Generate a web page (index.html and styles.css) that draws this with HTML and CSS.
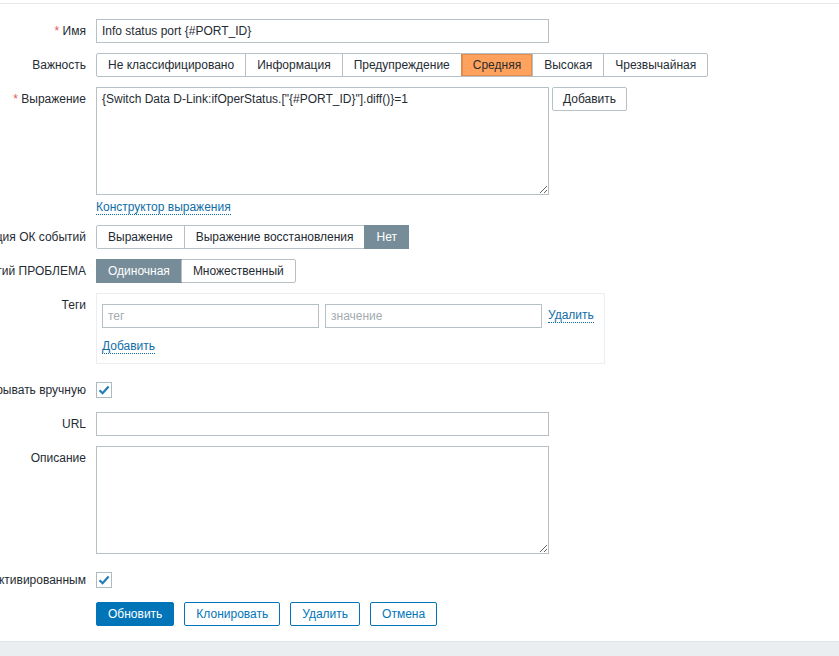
FILE: index.html
```html
<!DOCTYPE html>
<html lang="ru">
<head>
<meta charset="utf-8">
<title>Триггер</title>
<link rel="stylesheet" href="styles.css">
</head>
<body>
<div class="topbar"></div>
<main class="content">
  <div class="form-list">
    <div class="row">
      <div class="lbl"><span><span class="req">*</span> Имя</span></div>
      <div class="field"><input class="text wide" type="text" value="Info status port {#PORT_ID}"></div>
    </div>
    <div class="row">
      <div class="lbl"><span>Важность</span></div>
      <div class="field">
        <div class="seg">
          <span class="seg-btn">Не классифицировано</span>
          <span class="seg-btn">Информация</span>
          <span class="seg-btn">Предупреждение</span>
          <span class="seg-btn sev-avg">Средняя</span>
          <span class="seg-btn">Высокая</span>
          <span class="seg-btn">Чрезвычайная</span>
        </div>
      </div>
    </div>
    <div class="row">
      <div class="lbl"><span><span class="req">*</span> Выражение</span></div>
      <div class="field">
        <div class="expr">
          <textarea class="text wide area">{Switch Data D-Link:ifOperStatus.["{#PORT_ID}"].diff()}=1</textarea>
          <button class="btn-grey" type="button">Добавить</button>
        </div>
        <a class="link constructor" href="#">Конструктор выражения</a>
      </div>
    </div>
    <div class="row">
      <div class="lbl"><span>Генерация ОК событий</span></div>
      <div class="field">
        <div class="seg">
          <span class="seg-btn">Выражение</span>
          <span class="seg-btn">Выражение восстановления</span>
          <span class="seg-btn on">Нет</span>
        </div>
      </div>
    </div>
    <div class="row">
      <div class="lbl"><span>Режим генерации событий ПРОБЛЕМА</span></div>
      <div class="field">
        <div class="seg">
          <span class="seg-btn on">Одиночная</span>
          <span class="seg-btn">Множественный</span>
        </div>
      </div>
    </div>
    <div class="row">
      <div class="lbl"><span>Теги</span></div>
      <div class="field">
        <div class="tags">
          <div class="tag-row">
            <input class="text tag" type="text" placeholder="тег">
            <input class="text tag" type="text" placeholder="значение">
            <a class="link" href="#">Удалить</a>
          </div>
          <a class="link add" href="#">Добавить</a>
        </div>
      </div>
    </div>
    <div class="row row-check">
      <div class="lbl"><span>Разрешить закрывать вручную</span></div>
      <div class="field"><span class="check"><svg width="12" height="10" viewBox="0 0 12 10"><path d="M1.5 5.2 L4.6 8.2 L10.6 1.6" fill="none" stroke="#1f7db8" stroke-width="2.2"/></svg></span></div>
    </div>
    <div class="row">
      <div class="lbl"><span>URL</span></div>
      <div class="field"><input class="text wide" type="text" value=""></div>
    </div>
    <div class="row">
      <div class="lbl"><span>Описание</span></div>
      <div class="field"><textarea class="text wide area"></textarea></div>
    </div>
    <div class="row row-check">
      <div class="lbl"><span>Создать активированным</span></div>
      <div class="field"><span class="check"><svg width="12" height="10" viewBox="0 0 12 10"><path d="M1.5 5.2 L4.6 8.2 L10.6 1.6" fill="none" stroke="#1f7db8" stroke-width="2.2"/></svg></span></div>
    </div>
    <div class="row">
      <div class="lbl"></div>
      <div class="field buttons">
        <button class="btn-main" type="button">Обновить</button>
        <button class="btn-alt" type="button">Клонировать</button>
        <button class="btn-alt" type="button">Удалить</button>
        <button class="btn-alt" type="button">Отмена</button>
      </div>
    </div>
  </div>
</main>
<footer class="footer"></footer>
</body>
</html>
```
FILE: styles.css
```css
html, body {
  margin: 0;
  padding: 0;
  background: #ffffff;
  overflow: hidden;
}
body {
  font-family: "Liberation Sans", Arial, sans-serif;
  font-size: 12px;
  color: #1f2c33;
  width: 839px;
  height: 656px;
  display: flex;
  flex-direction: column;
}
.topbar {
  height: 3px;
  border-bottom: 1px solid #e6e8ea;
}
.content {
  flex: 1;
  padding-top: 15px;
}
.form-list {
  display: flex;
  flex-direction: column;
  gap: 10px;
}
.row {
  display: grid;
  grid-template-columns: 86px 1fr;
  column-gap: 10px;
}
.lbl {
  display: flex;
  justify-content: flex-end;
  white-space: nowrap;
  line-height: 24px;
  min-width: 0;
}
.row-check .lbl {
  padding-top: 4px;
}
.req {
  color: #e45959;
}
.field {
  display: flex;
  flex-direction: column;
  align-items: flex-start;
}
.text {
  box-sizing: border-box;
  font-family: "Liberation Sans", Arial, sans-serif;
  font-size: 12px;
  color: #1f2c33;
  border: 1px solid #b7c0c4;
  background: #fff;
  height: 24px;
  padding: 0 5px;
  margin: 0;
  outline: none;
}
.text::placeholder {
  color: #a3acb0;
}
.wide {
  width: 453px;
}
.area {
  height: 108px;
  padding: 4px 5px;
  line-height: 14px;
  resize: both;
  display: block;
}
.seg {
  display: flex;
  height: 24px;
  border: 1px solid #b7c0c4;
  box-sizing: border-box;
  border-radius: 2px;
}
.seg-btn {
  padding: 0 11px;
  line-height: 22px;
  border-left: 1px solid #b7c0c4;
  white-space: nowrap;
}
.seg-btn:first-child {
  border-left: none;
}
.seg-btn.sev-avg {
  background: #fea25e;
  color: #2c2c2c;
  border-left-color: #d58a4e;
  box-shadow: inset 0 0 0 1px #e08e4f;
}
.seg-btn.on {
  background: #768d99;
  color: #ffffff;
  border-left-color: #768d99;
  box-shadow: 0 0 0 1px #768d99;
}
.expr {
  display: flex;
  align-items: flex-start;
  gap: 3px;
}
.btn-grey {
  font-family: "Liberation Sans", Arial, sans-serif;
  font-size: 12px;
  color: #1f2c33;
  background: #fff;
  border: 1px solid #b7c0c4;
  border-radius: 2px;
  height: 24px;
  padding: 0 10px;
  margin: 0;
}
.link {
  color: #0f6ea8;
  text-decoration: none;
  border-bottom: 1px dotted #0f6ea8;
  line-height: 13px;
}
.constructor {
  margin-top: 6px;
}
.tags {
  box-sizing: border-box;
  width: 509px;
  border: 1px solid #ebeef0;
  padding: 10px 5px 9px 5px;
  display: flex;
  flex-direction: column;
  align-items: flex-start;
}
.tag-row {
  display: flex;
  align-items: center;
  gap: 6px;
}
.tag {
  width: 217px;
}
.add {
  margin-top: 12px;
}
.check {
  box-sizing: border-box;
  width: 16px;
  height: 16px;
  border: 1px solid #acbbc2;
  display: flex;
  align-items: center;
  justify-content: center;
  margin-top: 8px;
  margin-bottom: 4px;
}
.buttons {
  flex-direction: row;
  gap: 10px;
}
.btn-main, .btn-alt {
  font-family: "Liberation Sans", Arial, sans-serif;
  font-size: 12px;
  height: 24px;
  padding: 0 11px;
  margin: 0;
  border-radius: 2px;
  box-sizing: border-box;
}
.btn-main {
  background: #0275b8;
  border: 1px solid #0275b8;
  color: #ffffff;
}
.btn-alt {
  background: #ffffff;
  border: 1px solid #0275b8;
  color: #0275b8;
}
.footer {
  height: 14px;
  background: #ebeef0;
  border-top: 1px solid #dfe4e7;
}
```
